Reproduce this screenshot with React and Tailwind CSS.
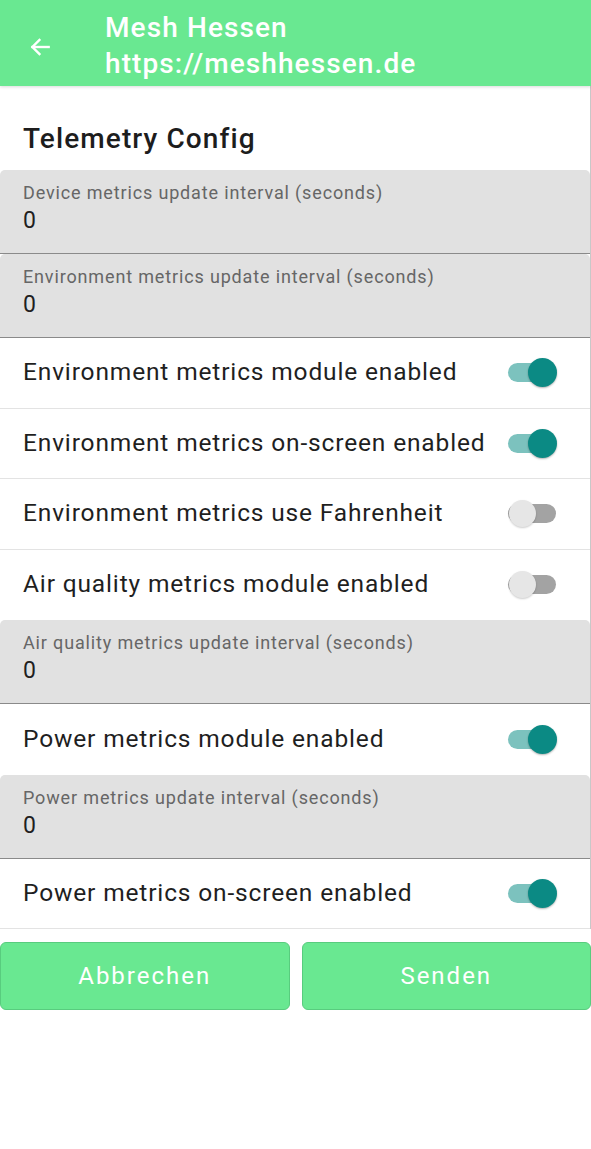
import React from "react";

const font = { fontFamily: "Roboto, 'Noto Sans', sans-serif" };

function Field({ label }) {
  return (
    <div className="h-[84px] bg-[#e1e1e1] rounded-t-[5px] border-b border-[#8a8a8a] px-[23px] pt-[11px] flex flex-col">
      <div className="text-[18px] leading-[24px] text-[#666666] tracking-[0.85px]">{label}</div>
      <div className="text-[23px] leading-[28px] text-[#1f1f1f] mt-[2px]">0</div>
    </div>
  );
}

function Toggle({ on }) {
  return (
    <div className="relative w-[50px] h-[30px] flex items-center">
      <div className={"absolute left-[1px] right-[1px] h-[19px] rounded-full " + (on ? "bg-[#7cc2be]" : "bg-[#a3a3a3]")} />
      {on ? (
        <div className="absolute right-0 w-[29px] h-[29px] rounded-full bg-[#0b8a84] shadow-[0_1px_2px_rgba(0,0,0,0.3)]" />
      ) : (
        <div className="absolute left-[2px] w-[27px] h-[27px] rounded-full bg-[#e6e6e6] shadow-[0_1px_2px_rgba(0,0,0,0.2)]" />
      )}
    </div>
  );
}

function SwitchRow({ label, on, divider = true }) {
  return (
    <div className={"h-[70.5px] flex items-center justify-between pl-[23px] pr-[33px] " + (divider ? "border-b border-[#e3e3e3]" : "")}>
      <span className="text-[24.5px] text-[#1f1f1f] tracking-[0.85px]">{label}</span>
      <Toggle on={on} />
    </div>
  );
}

export default function App() {
  return (
    <div className="w-[591px] h-[1149px] bg-white overflow-hidden" style={font}>
      <div className="h-[86px] bg-[#69e891] flex items-center shadow-[0_1px_3px_rgba(0,0,0,0.15)] relative z-10">
        <div className="w-[105px] flex justify-center pr-[26px] pt-[7px]">
          <svg width="26" height="26" viewBox="0 0 24 24" fill="none" stroke="#ffffff" strokeWidth="2.2" strokeLinecap="square">
            <path d="M20 12H5" />
            <path d="M11.5 5.5L5 12l6.5 6.5" />
          </svg>
        </div>
        <div className="flex flex-col text-white font-medium text-[28px] leading-[36px] tracking-[1.1px] pt-[6px]">
          <span>Mesh Hessen</span>
          <span>https://meshhessen.de</span>
        </div>
      </div>
      <div className="border-r border-[#c8c8c8] w-[591px]">
        <div className="h-[84px] flex items-end pb-[11px] px-[23px]">
          <span className="text-[28px] font-medium text-[#1d1d1d] leading-[40px] tracking-[1.1px]">Telemetry Config</span>
        </div>
        <Field label="Device metrics update interval (seconds)" />
        <Field label="Environment metrics update interval (seconds)" />
        <SwitchRow label="Environment metrics module enabled" on />
        <SwitchRow label="Environment metrics on-screen enabled" on />
        <SwitchRow label="Environment metrics use Fahrenheit" on={false} />
        <SwitchRow label="Air quality metrics module enabled" on={false} divider={false} />
        <Field label="Air quality metrics update interval (seconds)" />
        <SwitchRow label="Power metrics module enabled" on divider={false} />
        <Field label="Power metrics update interval (seconds)" />
        <SwitchRow label="Power metrics on-screen enabled" on />
      </div>
      <div className="flex gap-[12px] mt-[13px]">
        <button className="flex-1 h-[68px] bg-[#69e891] border border-[#58cc7e] rounded-[6px] text-white text-[24px] tracking-[2px]">Abbrechen</button>
        <button className="flex-1 h-[68px] bg-[#69e891] border border-[#58cc7e] rounded-[6px] text-white text-[24px] tracking-[2px]">Senden</button>
      </div>
    </div>
  );
}
